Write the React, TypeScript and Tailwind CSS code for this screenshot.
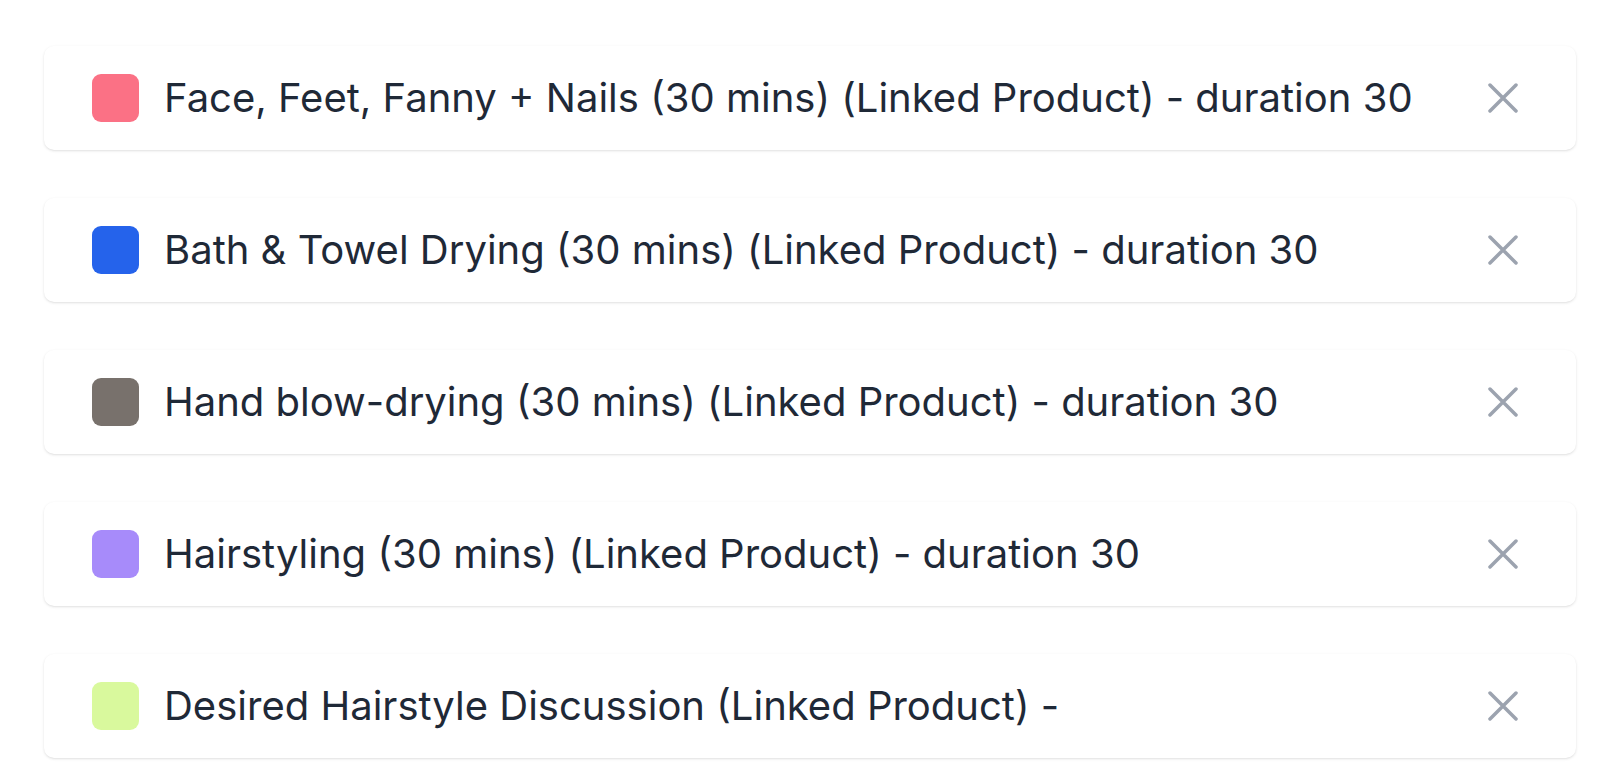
import React from "react";

const items = [
  { color: "bg-[#fb7185]", label: "Face, Feet, Fanny + Nails (30 mins) (Linked Product) - duration 30" },
  { color: "bg-[#2563eb]", label: "Bath & Towel Drying (30 mins) (Linked Product) - duration 30" },
  { color: "bg-[#78716c]", label: "Hand blow-drying (30 mins) (Linked Product) - duration 30" },
  { color: "bg-[#a78bfa]", label: "Hairstyling (30 mins) (Linked Product) - duration 30" },
  { color: "bg-[#d9f99d]", label: "Desired Hairstyle Discussion (Linked Product) -" },
];

function XIcon() {
  return (
    <svg width="30" height="30" viewBox="0 0 30 30" fill="none" stroke="#9ca3af" strokeWidth="3.5" strokeLinecap="round">
      <path d="M2 2 L28 28 M28 2 L2 28" />
    </svg>
  );
}

export default function App() {
  return (
    <div className="min-h-screen bg-white pt-[46px] pl-[44px] pr-[38px] font-['Inter',sans-serif]">
      <div className="flex flex-col gap-[48px]">
        {items.map((it, i) => (
          <div
            key={i}
            className="flex h-[104px] items-center rounded-[10px] bg-white pl-[48px] pr-[58px] shadow-[0_1px_3px_0_rgba(0,0,0,0.1),0_1px_2px_-1px_rgba(0,0,0,0.1)]"
          >
            <div className={`h-[48px] w-[47px] shrink-0 rounded-[9px] ${it.color}`} />
            <div className="ml-[25px] flex-1 text-[40px] leading-none text-[#1f2937]">{it.label}</div>
            <XIcon />
          </div>
        ))}
      </div>
    </div>
  );
}
